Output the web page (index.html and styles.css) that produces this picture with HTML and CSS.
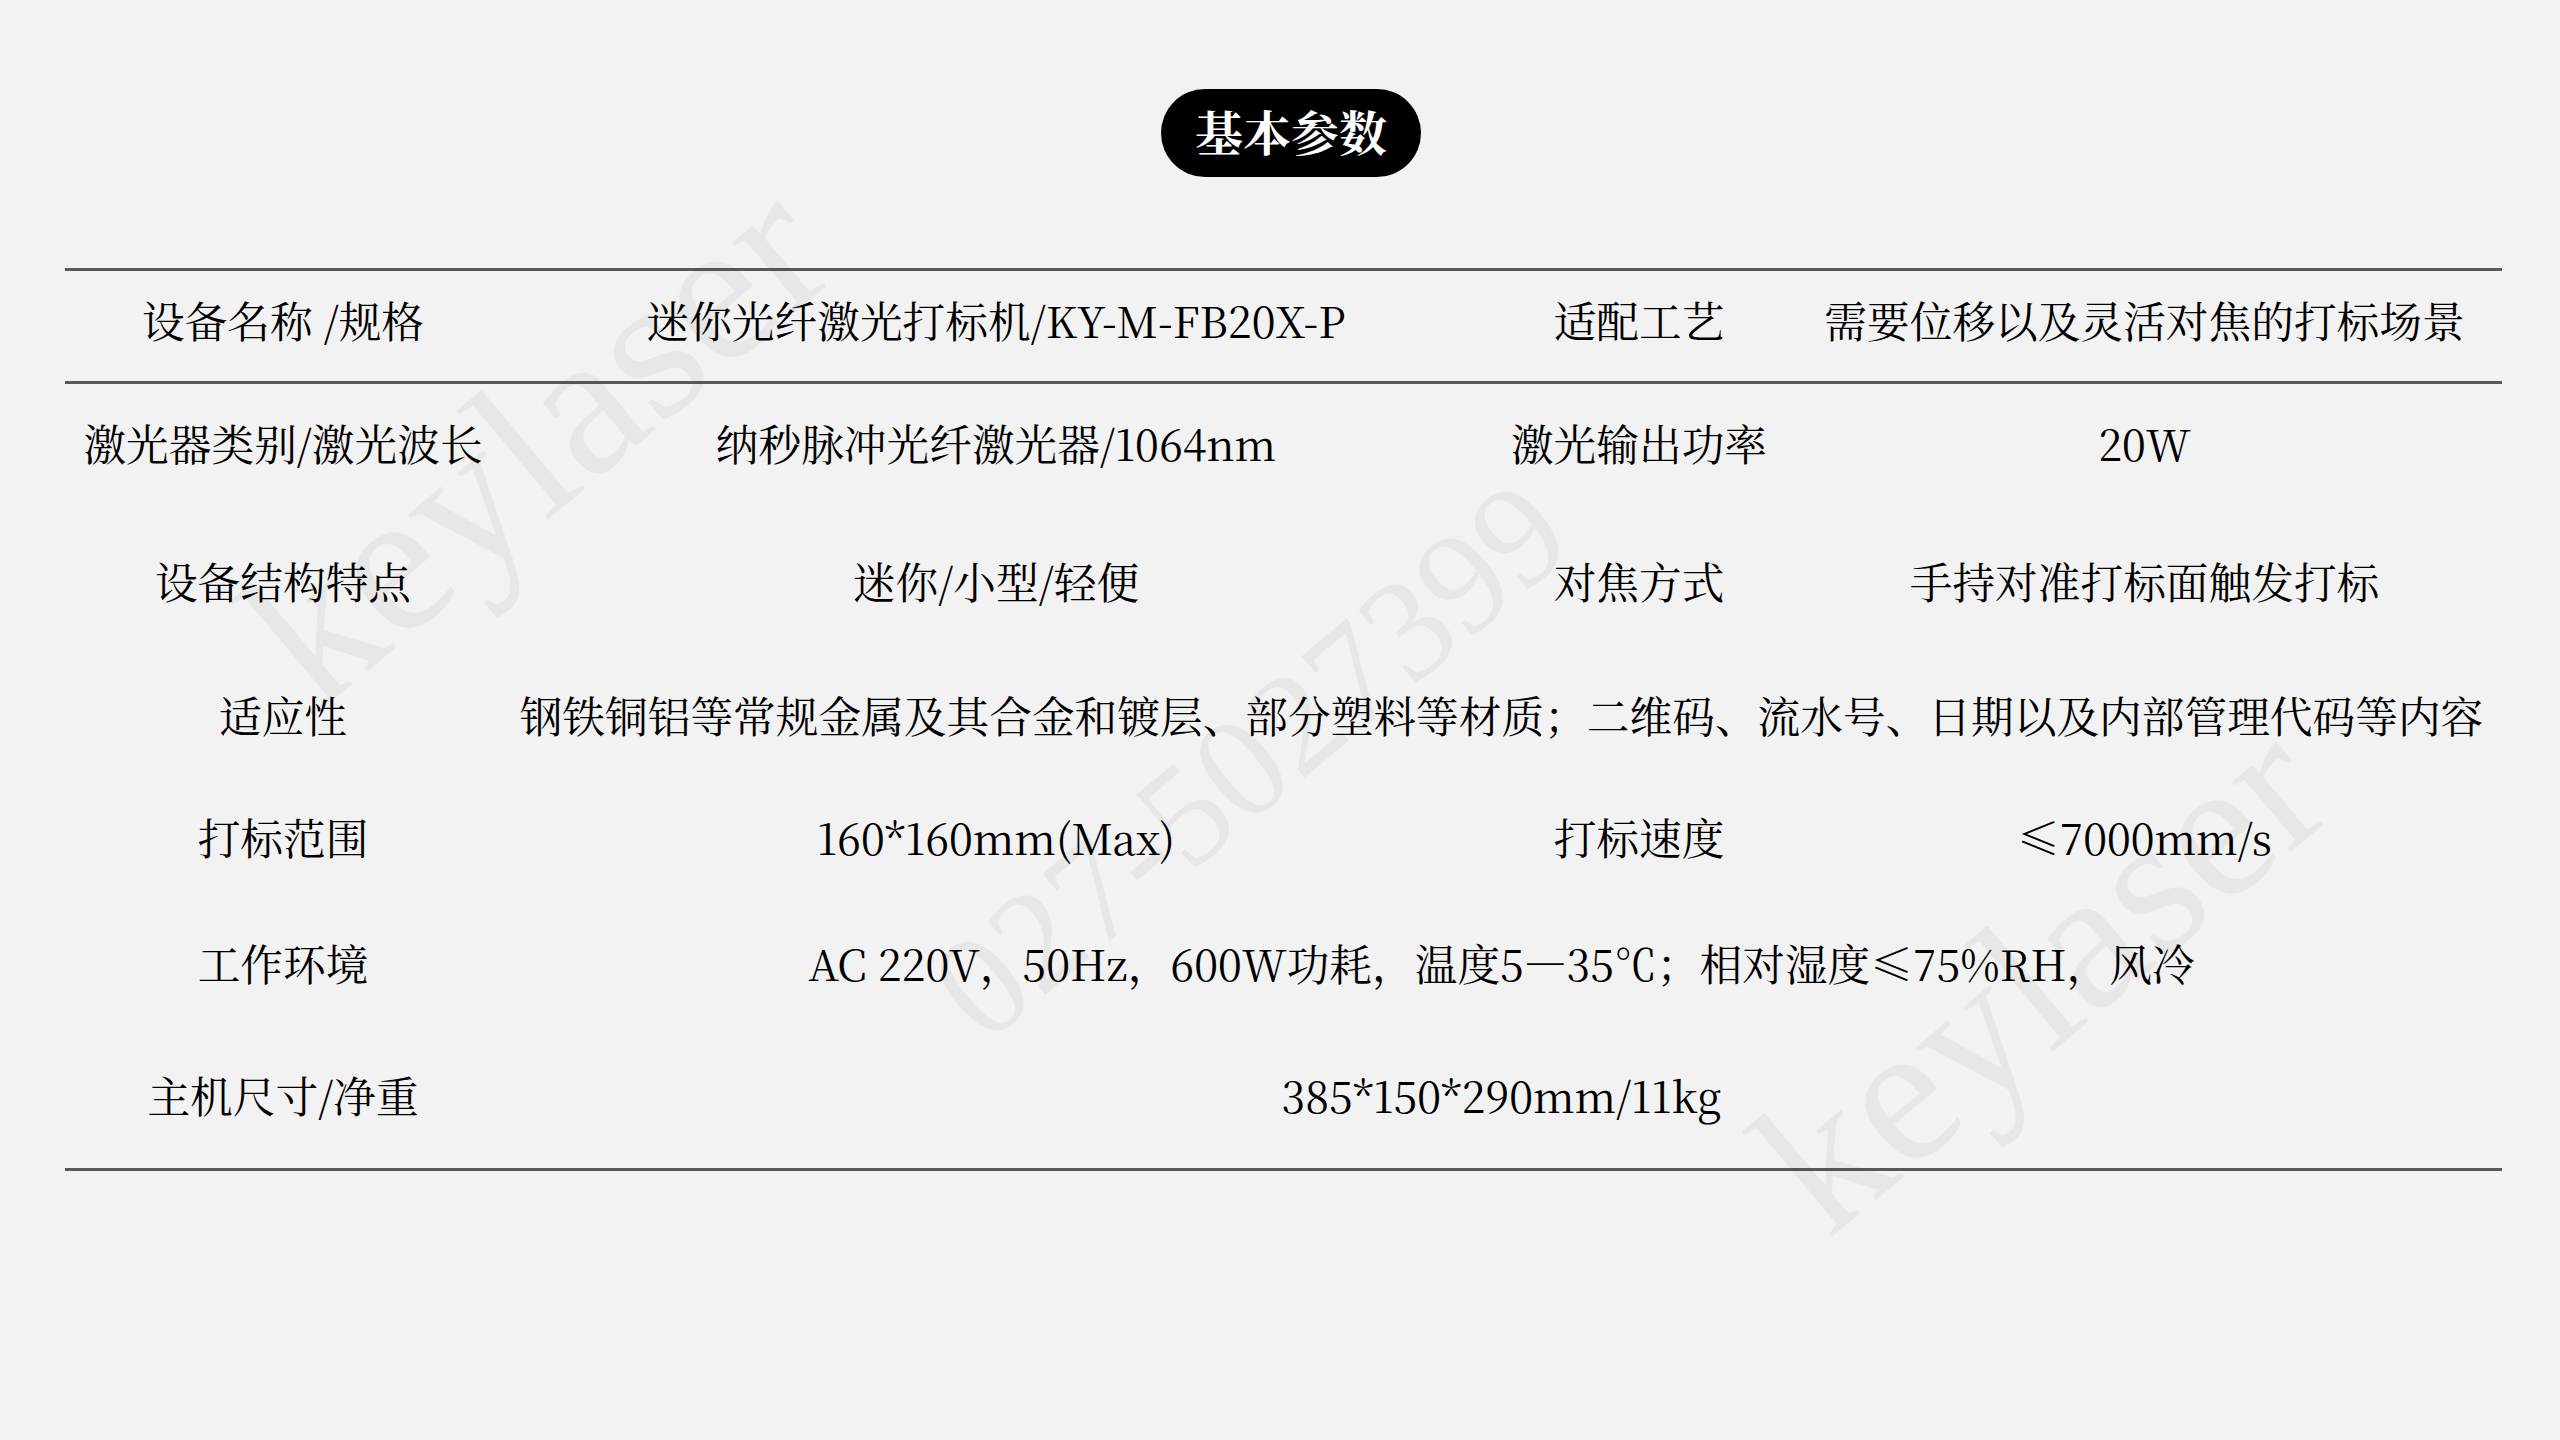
FILE: index.html
```html
<!DOCTYPE html>
<html lang="zh-CN">
<head>
  <meta charset="UTF-8" />
  <meta name="viewport" content="width=device-width, initial-scale=1.0"/>
  <title>基本参数</title>
  <link rel="stylesheet" href="styles.css">
</head>
<body>
  <div class="page">
    <div class="marks">
      <span class="mark mark-a">keylaser</span>
      <span class="mark mark-b">027-5027399</span>
      <span class="mark mark-c">keylaser</span>
    </div>

    <header class="heading">
      <h1 class="pill">基本参数</h1>
    </header>

    <div class="spec">
      <div class="row">
        <div class="cell">设备名称 /规格</div>
        <div class="cell">迷你光纤激光打标机/KY-M-FB20X-P</div>
        <div class="cell">适配工艺</div>
        <div class="cell">需要位移以及灵活对焦的打标场景</div>
      </div>
      <div class="row">
        <div class="cell">激光器类别/激光波长</div>
        <div class="cell">纳秒脉冲光纤激光器/1064nm</div>
        <div class="cell">激光输出功率</div>
        <div class="cell">20W</div>
      </div>
      <div class="row">
        <div class="cell">设备结构特点</div>
        <div class="cell">迷你/小型/轻便</div>
        <div class="cell">对焦方式</div>
        <div class="cell">手持对准打标面触发打标</div>
      </div>
      <div class="row">
        <div class="cell">适应性</div>
        <div class="cell wide">钢铁铜铝等常规金属及其合金和镀层、部分塑料等材质；二维码、流水号、日期以及内部管理代码等内容</div>
      </div>
      <div class="row">
        <div class="cell">打标范围</div>
        <div class="cell">160*160mm(Max)</div>
        <div class="cell">打标速度</div>
        <div class="cell">≤7000mm/s</div>
      </div>
      <div class="row">
        <div class="cell">工作环境</div>
        <div class="cell wide">AC 220V，50Hz，600W功耗，温度5—35℃；相对湿度≤75%RH，风冷</div>
      </div>
      <div class="row">
        <div class="cell">主机尺寸/净重</div>
        <div class="cell wide">385*150*290mm/11kg</div>
      </div>
    </div>
  </div>
</body>
</html>
```

FILE: styles.css
```css
body {
  margin: 0;
  background: #f2f2f2;
  color: #000;
  font-family: "Noto Serif CJK SC", "Liberation Serif", "Noto Sans CJK SC", serif;
}

.page {
  position: relative;
  width: 2560px;
  height: 1440px;
  overflow: hidden;
}

/* watermarks */
.marks {
  pointer-events: none;
}

.mark {
  position: absolute;
  transform: translate(-50%, -50%) rotate(-40deg);
  font-family: "Liberation Serif", serif;
  color: rgba(0, 0, 0, 0.045);
  white-space: nowrap;
  line-height: 1;
}

.mark-a {
  left: 535px;
  top: 440px;
  font-size: 205px;
}

.mark-b {
  left: 1250px;
  top: 760px;
  font-size: 145px;
}

.mark-c {
  left: 2040px;
  top: 975px;
  font-size: 200px;
}

/* title */
.heading {
  display: flex;
  justify-content: center;
  padding-top: 89px;
  padding-left: 22px;
}

.pill {
  margin: 0;
  height: 84px;
  padding: 0 34px 4px;
  border-radius: 44px;
  background: #000;
  color: #fff;
  font-size: 48px;
  font-weight: 700;
  line-height: 84px;
}

/* parameter table */
.spec {
  margin: 91px 0 0 65px;
  width: 2437px;
  border-top: 3px solid #595959;
  border-bottom: 3px solid #595959;
  font-size: 42.7px;
}

.row {
  box-sizing: border-box;
  display: grid;
  grid-template-columns: 436px 990px 296px 715px;
  align-items: center;
  padding-bottom: 5px;
}

.row:nth-child(1) { height: 113px; padding-bottom: 14px; border-bottom: 3px solid #595959; }
.row:nth-child(2) { height: 122px; }
.row:nth-child(3) { height: 154px; }
.row:nth-child(4) { height: 114px; }
.row:nth-child(5) { height: 130px; }
.row:nth-child(6) { height: 122px; }
.row:nth-child(7) { height: 142px; }

.cell {
  text-align: center;
  white-space: nowrap;
}

.wide {
  grid-column: span 3;
}
```
